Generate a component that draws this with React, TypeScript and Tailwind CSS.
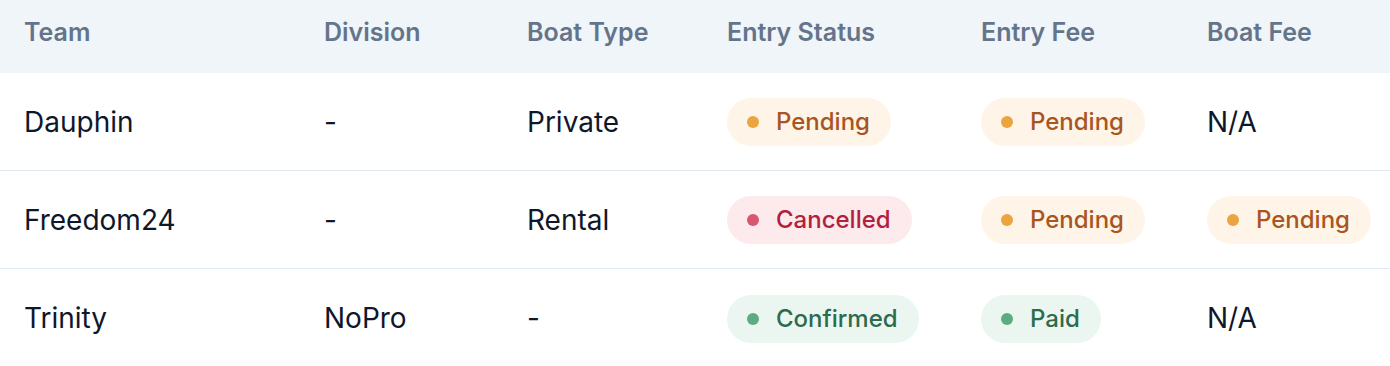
type Tone = 'pending' | 'cancelled' | 'confirmed';

const TONES: Record<Tone, { wrap: string; dot: string }> = {
  pending: { wrap: 'bg-[#fef5e8] text-[#a95423]', dot: 'bg-[#eaa440]' },
  cancelled: { wrap: 'bg-[#fdeaec] text-[#b4203c]', dot: 'bg-[#d95770]' },
  confirmed: { wrap: 'bg-[#ebf6f0] text-[#2d6b4c]', dot: 'bg-[#5cab82]' },
};

type Cell = string | { label: string; tone: Tone };

const rows: Cell[][] = [
  ['Dauphin', '-', 'Private', { label: 'Pending', tone: 'pending' }, { label: 'Pending', tone: 'pending' }, 'N/A'],
  ['Freedom24', '-', 'Rental', { label: 'Cancelled', tone: 'cancelled' }, { label: 'Pending', tone: 'pending' }, { label: 'Pending', tone: 'pending' }],
  ['Trinity', 'NoPro', '-', { label: 'Confirmed', tone: 'confirmed' }, { label: 'Paid', tone: 'confirmed' }, 'N/A'],
];

const headers = ['Team', 'Division', 'Boat Type', 'Entry Status', 'Entry Fee', 'Boat Fee'];

const COLS = 'grid grid-cols-[300px_203px_200px_254px_226px_1fr]';

function Badge({ label, tone }: { label: string; tone: Tone }) {
  const t = TONES[tone];
  return (
    <span className={`inline-flex items-center h-12 rounded-full pl-5 pr-[21px] gap-[17px] text-[24px] font-medium ${t.wrap}`}>
      <span className={`w-3 h-3 rounded-full ${t.dot}`} />
      {label}
    </span>
  );
}

export default function App() {
  return (
    <div className="w-[1390px] h-[366px] bg-white overflow-hidden" style={{ fontFamily: 'Inter, "Noto Sans", sans-serif' }}>
      {/* Header */}
      <div className={`${COLS} h-[73px] bg-[#f0f5f9] items-center pb-[7px]`}>
        {headers.map((h) => (
          <div key={h} className="pl-6 text-[25px] font-semibold text-[#64748b]">{h}</div>
        ))}
      </div>

      {/* Rows */}
      {rows.map((row, ri) => (
        <div key={ri} className={`${COLS} h-[98px] items-center ${ri < rows.length - 1 ? 'border-b border-[#e2e8f0]' : ''}`}>
          {row.map((cell, ci) => (
            <div key={ci} className="pl-6 text-[28px] text-[#0f172a]">
              {typeof cell === 'string' ? cell : <Badge label={cell.label} tone={cell.tone} />}
            </div>
          ))}
        </div>
      ))}
    </div>
  );
}
